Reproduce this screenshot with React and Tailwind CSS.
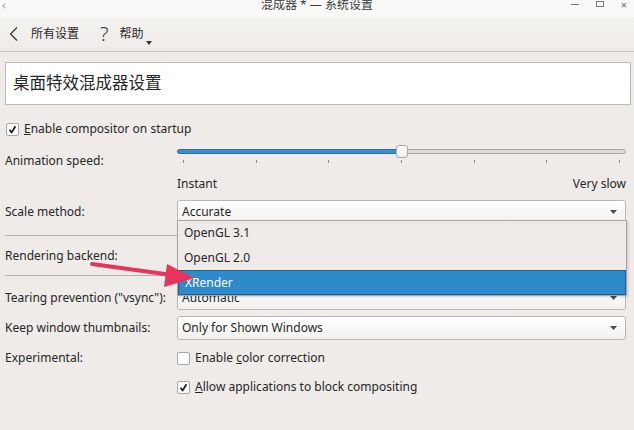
import React from "react";

const font = { fontFamily: '"Noto Sans", "Noto Sans CJK SC", sans-serif' };

function Check({ checked }) {
  return (
    <span className="w-[13px] h-[13px] shrink-0 bg-white border border-[#a9a6a3] rounded-[2px] flex items-center justify-center">
      {checked && (
        <svg width="9" height="9" viewBox="0 0 9 9">
          <path d="M1.6 4.8 L3.6 7.6 L7.4 1.2" fill="none" stroke="#1e1e1e" strokeWidth="1.8" strokeLinejoin="round" />
        </svg>
      )}
    </span>
  );
}

function Arrow() {
  return (
    <svg width="7" height="4" viewBox="0 0 7 4" className="shrink-0">
      <path d="M0 0 H7 L3.5 4 Z" fill="#4a4a4a" />
    </svg>
  );
}

function Combo({ value }) {
  return (
    <div className="h-full w-full flex items-center justify-between pl-[4px] pr-[8px] border border-[#bab7b4] rounded-[3px] bg-gradient-to-b from-white to-[#f2f1f0]">
      <span>{value}</span>
      <Arrow />
    </div>
  );
}

function Row({ label, className = "", children }) {
  return (
    <div className={`flex ${className}`}>
      <div className="w-[172px] shrink-0 flex items-center">{label}</div>
      <div className="flex-1 flex items-center">{children}</div>
    </div>
  );
}

export default function App() {
  const ticks = [0, 1, 2, 3, 4, 5, 6];
  return (
    <div className="relative w-[634px] h-[430px] overflow-hidden bg-[#eeebe8] text-[12px] text-[#272727]" style={font}>
      {/* title bar */}
      <div className="relative h-[17px] bg-[#f9f9f8] flex justify-center overflow-hidden">
        <span className="text-[12px] leading-[9px] text-[#3a3a3a]">混成器 * — 系统设置</span>
        <div className="absolute right-0 top-0 h-[10px] flex items-start gap-[17px] pr-[7px] text-[#666]">
          <span className="w-[8px] h-px bg-[#777] mt-[4px]" />
          <span className="w-[8px] h-[6px] border border-[#777] mt-[1px]" />
          <span className="text-[11px] leading-[9px]">×</span>
        </div>
        <span className="absolute left-[3px] top-[4px] w-[4px] h-[4px] border-l border-b border-[#aaa] rotate-45" />
      </div>

      {/* toolbar */}
      <div className="h-[35px] bg-gradient-to-b from-[#f4f2f0] to-[#eeebe8] border-b border-[#c4c1be] flex items-center pl-[9px] text-[12px]">
        <svg width="10" height="14" viewBox="0 0 10 14" className="mr-[12px]">
          <path d="M8 0.5 L1.5 7 L8 13.5" fill="none" stroke="#333" strokeWidth="1.2" />
        </svg>
        <span>所有设置</span>
        <span className="ml-[21px] text-[20px] font-light leading-none text-[#333]">?</span>
        <span className="ml-[11px]">帮助</span>
        <span className="self-end mb-[6px] ml-[2px]">
          <svg width="6" height="4" viewBox="0 0 6 4"><path d="M0 0 H6 L3 4 Z" fill="#333" /></svg>
        </span>
      </div>

      {/* content */}
      <div className="pl-[5px] pr-[8px]">
        <div className="mt-[10px] h-[43px] mr-[-5px] bg-white border border-[#bdbab7] flex items-center pl-[7px] text-[16.5px]">
          桌面特效混成器设置
        </div>

        <div className="mt-[12px] h-[24px] flex items-center pl-px gap-[5px]">
          <Check checked />
          <span><span className="underline">E</span>nable compositor on startup</span>
        </div>

        <div className="flex h-[27px] mt-[3px]">
          <div className="w-[172px] shrink-0 flex items-center pt-[7px]">Animation speed:</div>
          <div className="flex-1 pt-[5px]">
            <div className="relative h-[5px] rounded-full border border-[#a8a6a4] bg-[#dedcda]">
              <div className="absolute left-[-1px] top-[-1px] h-[5px] w-[225px] rounded-full bg-[#3a8fd0] border border-[#2a6fa3]" />
              <div className="absolute left-[218px] top-[-5px] w-[12px] h-[13px] rounded-[3px] bg-gradient-to-b from-white to-[#f0efee] border border-[#aaa7a4]" />
            </div>
            <div className="mt-[6px] px-[6px] flex justify-between">
              {ticks.map((t) => (
                <span key={t} className="w-px h-[3px] bg-[#8a8886]" />
              ))}
            </div>
          </div>
        </div>

        <div className="flex h-[26px] items-center">
          <div className="w-[172px] shrink-0" />
          <div className="flex-1 flex justify-between">
            <span>Instant</span>
            <span>Very slow</span>
          </div>
        </div>

        <Row label="Scale method:" className="mt-[3px] h-[23px]">
          <Combo value="Accurate" />
        </Row>

        <div className="mt-[12px] h-px bg-[#b3b0ad]" />

        <Row label="Rendering backend:" className="h-[39px]">
          <div className="h-[23px] w-full">
            <Combo value="" />
          </div>
        </Row>

        <div className="h-px bg-[#b3b0ad]" />

        <Row label={'Tearing prevention ("vsync"):'} className="mt-[10px] h-[24px]">
          <Combo value="Automatic" />
        </Row>

        <Row label="Keep window thumbnails:" className="mt-[6px] h-[24px]">
          <Combo value="Only for Shown Windows" />
        </Row>

        <Row label="Experimental:" className="mt-[6px] h-[24px]">
          <div className="flex items-center gap-[5px]">
            <Check />
            <span>Enable <span className="underline">c</span>olor correction</span>
          </div>
        </Row>

        <Row label="" className="mt-[5px] h-[24px]">
          <div className="flex items-center gap-[5px]">
            <Check checked />
            <span><span className="underline">A</span>llow applications to block compositing</span>
          </div>
        </Row>
      </div>

      {/* open combo popup */}
      <div className="absolute left-[177px] top-[220px] w-[450px] bg-[#eeebe8] border border-[#a9a6a3] shadow-[1px_1px_2px_rgba(0,0,0,0.15)]">
        <div className="h-[24px] flex items-center pl-[6px]">OpenGL 3.1</div>
        <div className="h-[25px] flex items-center pl-[6px]">OpenGL 2.0</div>
        <div className="h-[25px] flex items-center pl-[6px] bg-[#2f8acb] border border-[#22628f] text-white">XRender</div>
      </div>

      {/* annotation arrow */}
      <svg className="absolute left-0 top-0 pointer-events-none" width="634" height="430">
        <line x1="92" y1="264" x2="172" y2="275" stroke="#e8345b" strokeWidth="4" strokeLinecap="round" />
        <polygon points="194,278 167,264 164,287" fill="#e8345b" />
      </svg>
    </div>
  );
}
